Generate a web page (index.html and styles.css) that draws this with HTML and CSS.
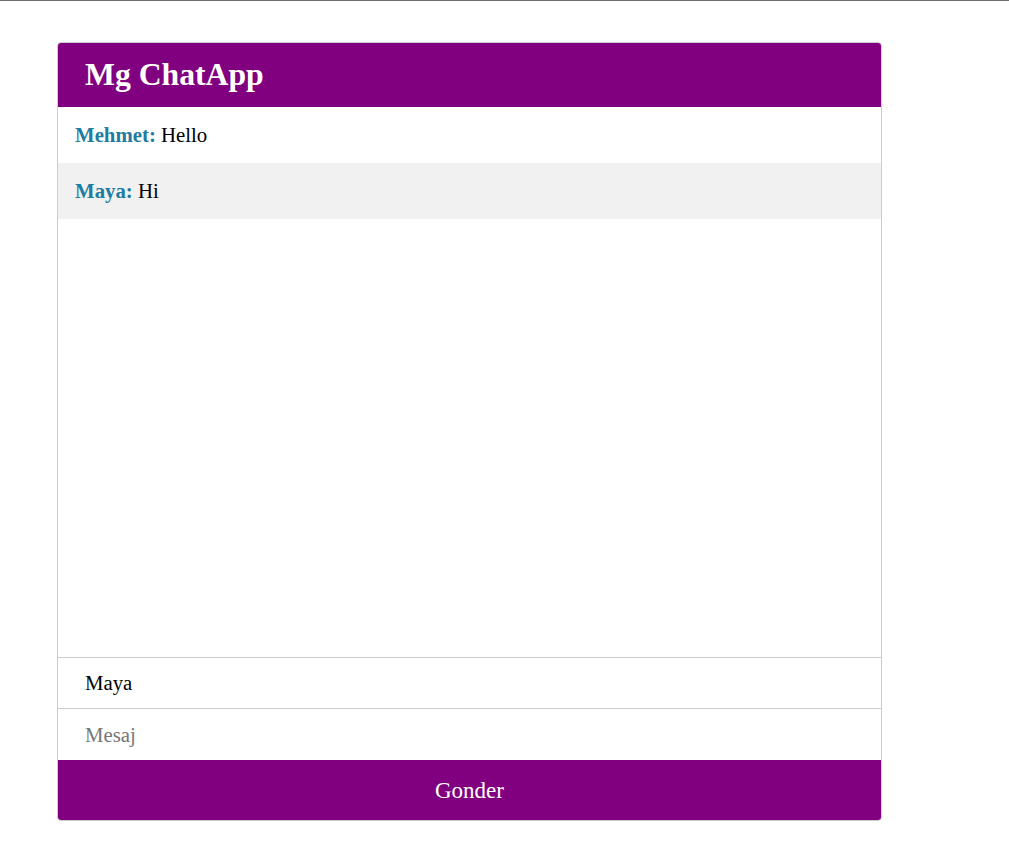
FILE: index.html
```html
<!DOCTYPE html>
<html>
<head>
<meta charset="utf-8">
<title>Mg ChatApp</title>
<link rel="stylesheet" href="styles.css">
</head>
<body>
<div class="chat">
  <div class="chat-header"><h1 class="title">Mg ChatApp</h1></div>
  <div class="messages">
    <div class="msg"><span class="name">Mehmet:</span> Hello</div>
    <div class="msg alt"><span class="name">Maya:</span> Hi</div>
  </div>
  <input class="field" type="text" value="Maya">
  <input class="field" type="text" placeholder="Mesaj">
  <button class="send">Gonder</button>
</div>
</body>
</html>
```
FILE: styles.css
```css
html, body {
  margin: 0;
  padding: 0;
  background: #fff;
}
body {
  border-top: 1px solid #6e6e6e;
  font-family: "Liberation Serif", "Times New Roman", serif;
  font-size: 20.8px;
  color: #000;
}
.chat {
  box-sizing: border-box;
  width: 825px;
  margin: 41px 0 0 57px;
  border: 1px solid #cccccc;
  border-radius: 4px;
  overflow: hidden;
  display: flex;
  flex-direction: column;
}
.chat-header {
  background: #800080;
  height: 65px;
  display: flex;
  align-items: center;
  padding: 0 28px;
  margin: -1px -1px 0 -1px;
}
.title {
  margin: 0;
  color: #fff;
  font-size: 31.7px;
  font-weight: bold;
}
.messages {
  height: 550px;
  border-bottom: 1px solid #cccccc;
}
.msg {
  height: 56px;
  box-sizing: border-box;
  padding: 16px 17px;
  line-height: 24px;
}
.msg.alt {
  background: #f1f1f1;
}
.name {
  font-weight: bold;
  color: #1f7ca1;
}
.field {
  box-sizing: border-box;
  height: 51px;
  border: none;
  border-bottom: 1px solid #cccccc;
  padding: 0 27px;
  font-family: "Liberation Serif", "Times New Roman", serif;
  font-size: 20.8px;
  color: #000;
  outline: none;
  width: 100%;
}
.field::placeholder {
  color: #777;
}
.field:last-of-type {
  border-bottom: none;
}
.send {
  height: 61px;
  border: none;
  background: #800080;
  color: #fff;
  font-family: "Liberation Serif", "Times New Roman", serif;
  font-size: 23px;
  margin: 0 -1px -1px -1px;
}
```
